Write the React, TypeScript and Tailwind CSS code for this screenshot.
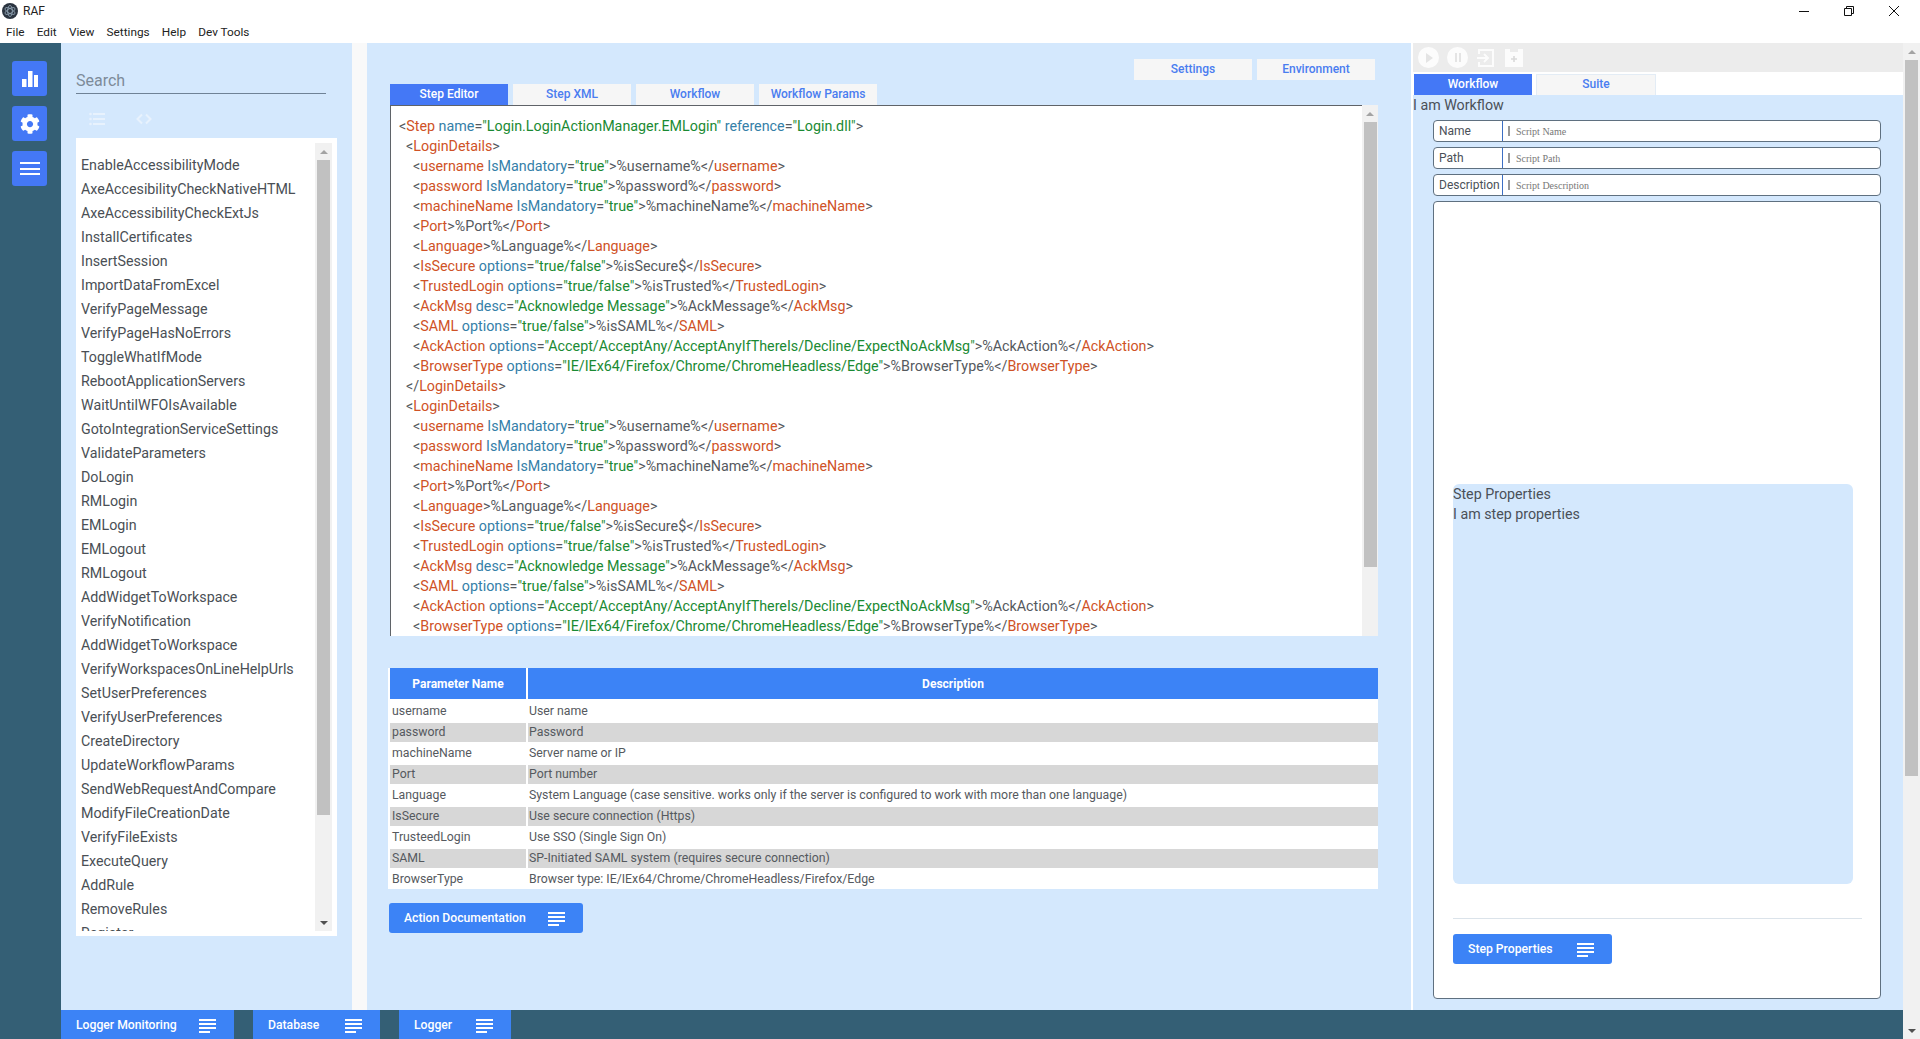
import { FaCog } from "react-icons/fa";

type Seg = [string, string];

const actions = [
  "EnableAccessibilityMode",
  "AxeAccesibilityCheckNativeHTML",
  "AxeAccessibilityCheckExtJs",
  "InstallCertificates",
  "InsertSession",
  "ImportDataFromExcel",
  "VerifyPageMessage",
  "VerifyPageHasNoErrors",
  "ToggleWhatIfMode",
  "RebootApplicationServers",
  "WaitUntilWFOIsAvailable",
  "GotoIntegrationServiceSettings",
  "ValidateParameters",
  "DoLogin",
  "RMLogin",
  "EMLogin",
  "EMLogout",
  "RMLogout",
  "AddWidgetToWorkspace",
  "VerifyNotification",
  "AddWidgetToWorkspace",
  "VerifyWorkspacesOnLineHelpUrls",
  "SetUserPreferences",
  "VerifyUserPreferences",
  "CreateDirectory",
  "UpdateWorkflowParams",
  "SendWebRequestAndCompare",
  "ModifyFileCreationDate",
  "VerifyFileExists",
  "ExecuteQuery",
  "AddRule",
  "RemoveRules",
  "Register",
];

const params: [string, string][] = [
  ["username", "User name"],
  ["password", "Password"],
  ["machineName", "Server name or IP"],
  ["Port", "Port number"],
  ["Language", "System Language (case sensitive. works only if the server is configured to work with more than one language)"],
  ["IsSecure", "Use secure connection (Https)"],
  ["TrusteedLogin", "Use SSO (Single Sign On)"],
  ["SAML", "SP-Initiated SAML system (requires secure connection)"],
  ["BrowserType", "Browser type: IE/IEx64/Chrome/ChromeHeadless/Firefox/Edge"],
];

// t = tag, a = attribute, s = string, x = plain
function tagLine(tag: string, attr: string | null, value: string | null, body: string): Seg[] {
  const out: Seg[] = [["x", "<"], ["t", tag]];
  if (attr) out.push(["x", " "], ["a", attr], ["x", "="], ["s", `"${value}"`]);
  out.push(["x", `>${body}</`], ["t", tag], ["x", ">"]);
  return out;
}

const detailLines: Seg[][] = [
  tagLine("username", "IsMandatory", "true", "%username%"),
  tagLine("password", "IsMandatory", "true", "%password%"),
  tagLine("machineName", "IsMandatory", "true", "%machineName%"),
  tagLine("Port", null, null, "%Port%"),
  tagLine("Language", null, null, "%Language%"),
  tagLine("IsSecure", "options", "true/false", "%isSecure$"),
  tagLine("TrustedLogin", "options", "true/false", "%isTrusted%"),
  tagLine("AckMsg", "desc", "Acknowledge Message", "%AckMessage%"),
  tagLine("SAML", "options", "true/false", "%isSAML%"),
  tagLine("AckAction", "options", "Accept/AcceptAny/AcceptAnyIfThereIs/Decline/ExpectNoAckMsg", "%AckAction%"),
  tagLine("BrowserType", "options", "IE/IEx64/Firefox/Chrome/ChromeHeadless/Edge", "%BrowserType%"),
];

const segColor: Record<string, string> = {
  t: "text-[#cf5226]",
  a: "text-[#3580a8]",
  s: "text-[#1a8a33]",
  x: "text-[#55595e]",
};

function XmlLine({ segs, indent }: { segs: Seg[]; indent: string }) {
  return (
    <div className={`h-5 leading-5 whitespace-pre ${indent}`}>
      {segs.map((s, i) => (
        <span key={i} className={segColor[s[0]]}>
          {s[1]}
        </span>
      ))}
    </div>
  );
}

function LinesIcon({ className = "" }: { className?: string }) {
  return (
    <svg viewBox="0 0 17 14" width="17" height="14" className={className} fill="#fff">
      <rect x="0" y="0" width="17" height="2" />
      <rect x="0" y="4" width="17" height="2" />
      <rect x="0" y="8" width="17" height="2" />
      <rect x="0" y="12" width="11" height="2" />
    </svg>
  );
}

function BlueButton({ label, className }: { label: string; className: string }) {
  return (
    <div className={`flex items-center whitespace-nowrap bg-[#3c83f6] text-white font-medium text-[12.2px] pl-[15px] pr-[18px] ${className}`}>
      <span>{label}</span>
      <LinesIcon className="ml-auto" />
    </div>
  );
}

function SideButton({ children }: { children: React.ReactNode }) {
  return (
    <div className="w-[35px] h-[35px] rounded-[3px] bg-[#4478f6] flex items-center justify-center text-white">
      {children}
    </div>
  );
}

function Tab({ label, active, className }: { label: string; active?: boolean; className: string }) {
  return (
    <div
      className={`h-[21px] pb-[2px] flex items-center justify-center text-[12px] font-medium ${className} ${
        active ? "bg-[#4478f6] text-white" : "bg-[#f6f6f6] text-[#4a7df0]"
      }`}
    >
      {label}
    </div>
  );
}

function Field({ label, placeholder }: { label: string; placeholder: string }) {
  return (
    <div className="h-[22px] flex border border-[#5f7080] rounded-[4px] bg-white">
      <div className="w-[69px] border-r border-[#3c6fc4] pl-[5px] text-[12px] leading-[20px] text-[#4a5058]">{label}</div>
      <div className="flex-1 flex items-center pl-[5px] text-[10px] text-[#777]" style={{ fontFamily: '"Liberation Serif", serif' }}>
        <span className="w-[2px] h-[10px] bg-[#999] mr-[6px]" />
        {placeholder}
      </div>
    </div>
  );
}

function ScrollTrack({ className, thumb, arrowDown = true }: { className: string; thumb: string; arrowDown?: boolean }) {
  return (
    <div className={`bg-[#f1f1f1] flex flex-col items-center ${className}`}>
      <div className="h-[17px] shrink-0 flex items-center justify-center">
        <div className="w-0 h-0 border-x-[4px] border-x-transparent border-b-[4px] border-b-[#a3a3a3]" />
      </div>
      <div className={`w-[13px] bg-[#c1c1c1] ${thumb}`} />
      {arrowDown && (
        <div className="mt-auto h-[17px] shrink-0 flex items-center justify-center">
          <div className="w-0 h-0 border-x-[4px] border-x-transparent border-t-[4px] border-t-[#505050]" />
        </div>
      )}
    </div>
  );
}

export default function App() {
  return (
    <div className="w-[1920px] h-[1039px] overflow-hidden flex flex-col bg-white text-[#4a5058]" style={{ fontFamily: 'Roboto, "Liberation Sans", sans-serif' }}>
      {/* window chrome */}
      <div className="h-[22px] flex items-center pl-[2px] text-[12px] text-[#222]">
        <svg viewBox="0 0 16 16" width="16" height="16" className="mr-[5px]">
          <circle cx="8" cy="8" r="8" fill="#2b3440" />
          <ellipse cx="8" cy="8" rx="5.6" ry="2.3" fill="none" stroke="#9fb3c4" strokeWidth="0.7" transform="rotate(30 8 8)" />
          <ellipse cx="8" cy="8" rx="5.6" ry="2.3" fill="none" stroke="#9fb3c4" strokeWidth="0.7" transform="rotate(90 8 8)" />
          <ellipse cx="8" cy="8" rx="5.6" ry="2.3" fill="none" stroke="#9fb3c4" strokeWidth="0.7" transform="rotate(150 8 8)" />
        </svg>
        RAF
        <div className="ml-auto flex items-center pr-[3px] text-black">
          <svg width="46" height="20" viewBox="0 0 46 20"><path d="M18 10.5h10" stroke="#111" strokeWidth="1" /></svg>
          <svg width="44" height="20" viewBox="0 0 44 20" fill="none" stroke="#111"><path d="M17.5 7.5h7v7h-7zM19.5 7.5v-2h7v7h-2" /></svg>
          <svg width="46" height="20" viewBox="0 0 46 20" fill="none" stroke="#111"><path d="M18 5l10 10M28 5l-10 10" /></svg>
        </div>
      </div>
      <div className="h-[21px] flex items-center pl-[6px] pt-[1px] gap-[12.2px] text-[11.8px] text-[#222]">
        <span>File</span>
        <span>Edit</span>
        <span>View</span>
        <span>Settings</span>
        <span>Help</span>
        <span>Dev Tools</span>
      </div>

      <div className="flex-1 flex min-h-0">
        {/* icon rail */}
        <div className="w-[61px] bg-[#345f75] flex flex-col items-start gap-[10px] pt-[18px] pl-[12px]">
          <SideButton>
            <svg width="16" height="16" viewBox="0 0 16 16" fill="#fff">
              <rect x="0" y="8" width="4.5" height="8" />
              <rect x="6" y="0" width="4.5" height="16" />
              <rect x="12" y="4" width="4" height="12" />
            </svg>
          </SideButton>
          <SideButton>
            <FaCog size={20} />
          </SideButton>
          <SideButton>
            <div className="flex flex-col gap-[3.5px]">
              <div className="w-[20px] h-[2px] bg-white" />
              <div className="w-[20px] h-[2px] bg-white" />
              <div className="w-[20px] h-[2px] bg-white" />
            </div>
          </SideButton>
        </div>

        {/* actions list */}
        <div className="w-[291px] bg-[#d4e8fd] pl-[15px] pt-[25px]">
          <div className="w-[250px] h-[26px] border-b border-[#6f8296] text-[16px] leading-[25px] text-[#7d8b99]">Search</div>
          <div className="h-[44px] flex items-center gap-[31px] pl-[13px] pt-[5px] text-white">
            <svg width="16" height="14" viewBox="0 0 16 14" fill="#e8f2fd">
              <circle cx="1.5" cy="2" r="1.3" />
              <circle cx="1.5" cy="7" r="1.3" />
              <circle cx="1.5" cy="12" r="1.3" />
              <rect x="4" y="1" width="12" height="2" />
              <rect x="4" y="6" width="12" height="2" />
              <rect x="4" y="11" width="12" height="2" />
            </svg>
            <svg width="16" height="12" viewBox="0 0 16 12" fill="none" stroke="#e8f2fd" strokeWidth="2">
              <path d="M6 1.5L1.5 6 6 10.5M10 1.5L14.5 6 10 10.5" />
            </svg>
          </div>
          <div className="w-[261px] h-[798px] bg-white flex pt-[5px] pb-[5px] pl-[5px] pr-[5px]">
            <div className="flex-1 overflow-hidden pt-[10px] text-[14.25px] text-[#4a4f55]">
              {actions.map((a, i) => (
                <div key={i} className="h-[24px] leading-[24px] whitespace-nowrap">
                  {a}
                </div>
              ))}
            </div>
            <ScrollTrack className="w-[17px] shrink-0" thumb="h-[655px]" />
          </div>
        </div>

        <div className="w-[15px] bg-[#f9f9f9]" />

        {/* editor column */}
        <div className="w-[1044px] bg-[#d4e8fd] pl-[19px]">
          <div className="w-[989px] flex justify-end gap-[5px] pt-[16px]">
            <Tab label="Settings" className="w-[118px]" />
            <Tab label="Environment" className="w-[118px]" />
          </div>
          <div className="flex gap-[5px] mt-[4px] ml-[4px]">
            <Tab label="Step Editor" active className="w-[118px]" />
            <Tab label="Step XML" className="w-[118px]" />
            <Tab label="Workflow" className="w-[118px]" />
            <Tab label="Workflow Params" className="w-[118px]" />
          </div>
          <div className="w-[988px] ml-[4px] h-[531px] bg-white border-l border-[#5f6368] flex">
            <div className="flex-1 overflow-hidden border-t border-[#5f6368] pt-[10px] pl-[8px] text-[14.3px]">
              <XmlLine
                indent=""
                segs={[
                  ["x", "<"],
                  ["t", "Step"],
                  ["x", " "],
                  ["a", "name"],
                  ["x", "="],
                  ["s", '"Login.LoginActionManager.EMLogin"'],
                  ["x", " "],
                  ["a", "reference"],
                  ["x", "="],
                  ["s", '"Login.dll"'],
                  ["x", ">"],
                ]}
              />
              <XmlLine indent="pl-[7px]" segs={[["x", "<"], ["t", "LoginDetails"], ["x", ">"]]} />
              {detailLines.map((l, i) => (
                <XmlLine key={i} indent="pl-[14px]" segs={l} />
              ))}
              <XmlLine indent="pl-[7px]" segs={[["x", "</"], ["t", "LoginDetails"], ["x", ">"]]} />
              <XmlLine indent="pl-[7px]" segs={[["x", "<"], ["t", "LoginDetails"], ["x", ">"]]} />
              {detailLines.map((l, i) => (
                <XmlLine key={i} indent="pl-[14px]" segs={l} />
              ))}
            </div>
            <ScrollTrack className="w-[16px] shrink-0" thumb="h-[445px]" arrowDown={false} />
          </div>

          <div className="w-[990px] ml-[2px] mt-[32px] bg-white text-[12.3px]">
            <div className="h-[31px] flex gap-[2px] pl-[2px] text-[12px] text-white font-bold">
              <div className="w-[136px] bg-[#3c83f6] flex items-center justify-center">Parameter Name</div>
              <div className="flex-1 bg-[#3c83f6] flex items-center justify-center">Description</div>
            </div>
            <div className="pt-[1px]">
              {params.map(([n, d], i) => (
                <div key={n} className="h-[21px] flex gap-[2px] pl-[2px] pt-[2px] leading-[19px] text-[#55595e]">
                  <div className={`w-[136px] pl-[2px] ${i % 2 ? "bg-[#d7d7d7]" : ""}`}>{n}</div>
                  <div className={`flex-1 pl-[1px] ${i % 2 ? "bg-[#d7d7d7]" : ""}`}>{d}</div>
                </div>
              ))}
            </div>
          </div>
          <BlueButton label="Action Documentation" className="w-[194px] h-[30px] mt-[14px] ml-[3px] pt-[1px] rounded-[3px]" />
        </div>

        <div className="w-[2px] bg-white" />

        {/* workflow column */}
        <div className="w-[490px] bg-[#d4e8fd] flex flex-col">
          <div className="h-[29px] bg-[#ececec] flex items-center gap-[8px] pl-[5px]">
            <div className="w-[21px] h-[21px] rounded-full bg-white/85 flex items-center justify-center">
              <div className="w-0 h-0 border-y-[5px] border-y-transparent border-l-[7px] border-l-[#e4e4e4] ml-[2px]" />
            </div>
            <div className="w-[21px] h-[21px] rounded-full bg-white/85 flex items-center justify-center gap-[2px]">
              <div className="w-[2px] h-[9px] bg-[#e4e4e4]" />
              <div className="w-[2px] h-[9px] bg-[#e4e4e4]" />
            </div>
            <svg width="20" height="20" viewBox="0 0 20 20" fill="none" stroke="#fff" strokeWidth="2" opacity="0.85">
              <path d="M3 6V2h14v16H3v-4M1 10h11M8 6l4 4-4 4" />
            </svg>
            <svg width="20" height="20" viewBox="0 0 20 20" opacity="0.85">
              <path d="M1 1h5v3h8V1h5v18H1z" fill="#fff" />
              <path d="M7 11h6M10 8v6" stroke="#d8d8d8" strokeWidth="1.6" fill="none" />
            </svg>
          </div>
          <div className="h-[23px] bg-white flex items-end gap-[4px] pl-[1px]">
            <Tab label="Workflow" active className="w-[118px]" />
            <Tab label="Suite" className="w-[120px] border-x border-t border-[#e3ecf5]" />
          </div>
          <div className="h-[25px] leading-[21px] text-[14.25px]">I am Workflow</div>
          <div className="flex-1 flex flex-col gap-[5px] pl-[20px] pr-[22px] pb-[12px]">
            <Field label="Name" placeholder="Script Name" />
            <Field label="Path" placeholder="Script Path" />
            <Field label="Description" placeholder="Script Description" />
            <div className="h-[798px] bg-white border border-[#5f7080] rounded-[4px] px-[19px] flex flex-col">
              <div className="h-[282px] shrink-0" />
              <div className="w-[400px] h-[400px] shrink-0 bg-[#d4e8fd] rounded-[6px] text-[14.25px] leading-[20px]">
                <div>Step Properties</div>
                <div>I am step properties</div>
              </div>
              <div className="h-[1px] w-[409px] shrink-0 bg-[#dbe3ea] mt-[34px]" />
              <BlueButton label="Step Properties" className="w-[159px] h-[30px] mt-[15px] pt-[1px] rounded-[3px]" />
            </div>
          </div>
        </div>

        {/* window scrollbar */}
        <ScrollTrack className="w-[17px] shrink-0 h-[996px]" thumb="h-[716px]" />
      </div>

      <div className="h-[29px] w-[1903px] bg-[#345f75] flex pl-[61px] gap-[19px] mt-[-29px] relative">
        <BlueButton label="Logger Monitoring" className="w-[173px] pt-[2px]" />
        <BlueButton label="Database" className="w-[127px] pt-[2px]" />
        <BlueButton label="Logger" className="w-[112px] pt-[2px]" />
      </div>
    </div>
  );
}
